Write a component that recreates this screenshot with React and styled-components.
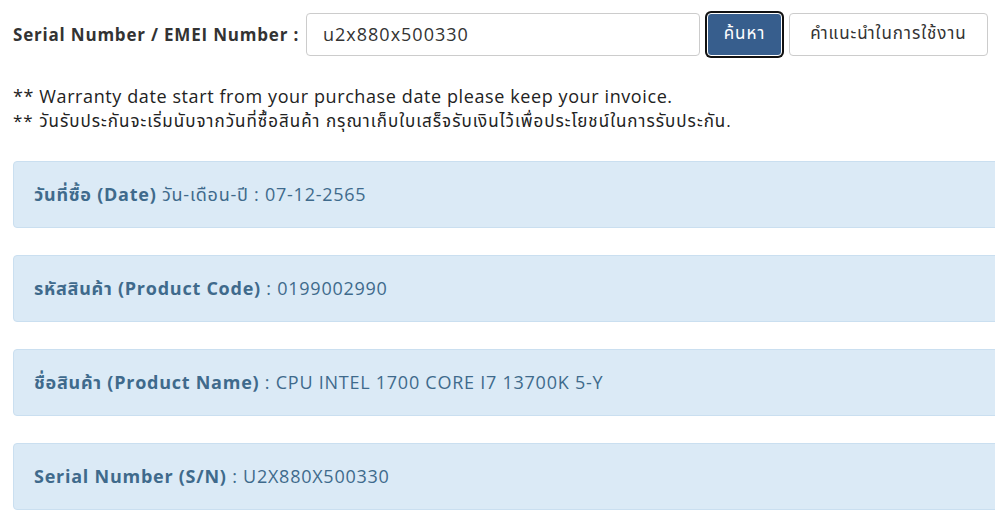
import React from 'react';
import styled, { createGlobalStyle } from 'styled-components';

const GlobalStyle = createGlobalStyle`
    html, body {
        margin: 0;
        padding: 0;
        background: #fff;
        overflow: hidden;
    }
    body {
        font-family: "Open Sans", "Noto Sans", "Noto Sans Thai", "DejaVu Sans", sans-serif;
        color: #333;
    }
`;

const Page = styled.div`
    width: 1010px;
    padding: 12px 0 0 13px;
    box-sizing: border-box;
`;

const SearchRow = styled.form`
    display: flex;
    align-items: center;
    height: 44px;
`;

const Label = styled.label`
    font-size: 17px;
    font-weight: 700;
    letter-spacing: 0.8px;
    color: #333;
    width: 293px;
    white-space: nowrap;
`;

const Input = styled.input`
    width: 394px;
    height: 43px;
    box-sizing: border-box;
    border: 1px solid #ccc;
    border-radius: 4px;
    padding: 0 16px;
    font-family: inherit;
    font-size: 18px;
    letter-spacing: 1px;
    color: #333;
    outline: none;
`;

const Button = styled.button`
    height: 43px;
    width: ${p => p.$width}px;
    box-sizing: border-box;
    margin-left: 7px;
    padding: 0;
    border-radius: 4px;
    font-family: inherit;
    font-size: 17px;
    letter-spacing: 1px;
    white-space: nowrap;
    cursor: pointer;
    background: ${p => (p.$primary ? '#375e8d' : '#fff')};
    color: ${p => (p.$primary ? '#fff' : '#333')};
    border: 1px solid ${p => (p.$primary ? '#fff' : '#ccc')};
    box-shadow: ${p => (p.$primary ? '0 0 0 2px #111' : 'none')};
`;

const Notes = styled.div`
    margin-top: 27px;
`;

const NoteLine = styled.p`
    margin: 0;
    font-size: ${p => p.$size}px;
    line-height: ${p => p.$lh}px;
    letter-spacing: ${p => p.$ls}px;
    color: #222;
    white-space: nowrap;
`;

const Results = styled.div`
    display: flex;
    flex-direction: column;
    gap: 27px;
    margin-top: 28px;
`;

const InfoBox = styled.div`
    height: 67px;
    box-sizing: border-box;
    padding: 0 20px;
    line-height: 64px;
    background: #dbeaf6;
    border: 1px solid #cadff0;
    border-radius: 4px;
    font-size: 18px;
    letter-spacing: 0.75px;
    color: #3f6a8c;
    white-space: pre;
`;

const Key = styled.span`
    font-weight: 700;
`;

const rows = [
    { key: 'วันที่ซื้อ (Date)', rest: ' วัน-เดือน-ปี : 07-12-2565' },
    { key: 'รหัสสินค้า (Product Code)', rest: ' : 0199002990' },
    { key: 'ชื่อสินค้า (Product Name)', rest: ' : CPU INTEL 1700 CORE I7 13700K 5-Y' },
    { key: 'Serial Number (S/N)', rest: ' : U2X880X500330' },
];

const App = () => (
    <>
        <GlobalStyle />
        <Page>
            <SearchRow onSubmit={e => e.preventDefault()}>
                <Label>Serial Number / EMEI Number :</Label>
                <Input defaultValue="u2x880x500330" />
                <Button $primary $width={75}>ค้นหา</Button>
                <Button $width={199}>คำแนะนำในการใช้งาน</Button>
            </SearchRow>
            <Notes>
                <NoteLine $size={18} $lh={26} $ls={0.6}>** Warranty date start from your purchase date please keep your invoice.</NoteLine>
                <NoteLine $size={17} $lh={24} $ls={1.0}>** วันรับประกันจะเริ่มนับจากวันที่ซื้อสินค้า กรุณาเก็บใบเสร็จรับเงินไว้เพื่อประโยชน์ในการรับประกัน.</NoteLine>
            </Notes>
            <Results>
                {rows.map(r => (
                    <InfoBox key={r.key}>
                        <Key>{r.key}</Key>
                        {r.rest}
                    </InfoBox>
                ))}
            </Results>
        </Page>
    </>
);

export default App;
